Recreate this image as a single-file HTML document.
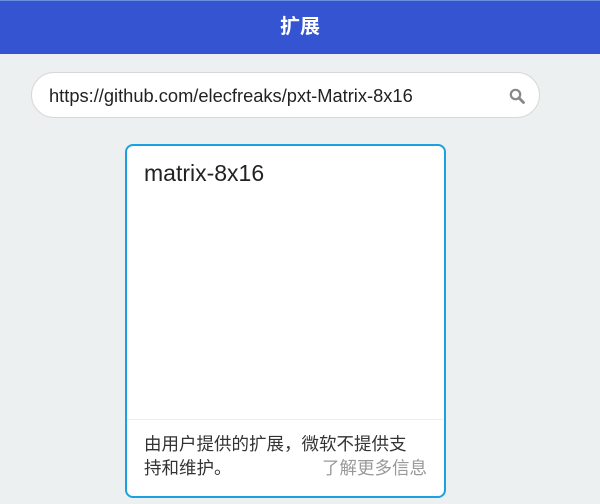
<!DOCTYPE html>
<html><head><meta charset="utf-8"><style>
*{margin:0;padding:0;box-sizing:border-box}
body{width:600px;height:504px;background:#ecf0f1;font-family:"Liberation Sans","Noto Sans CJK SC",sans-serif;position:relative;overflow:hidden}
.hdr{position:absolute;left:0;top:0;width:600px;height:54px;background:#3454d1;border-top:1px solid #6b8fe0;color:#fff;font-weight:bold;font-size:20px;text-align:center;line-height:52px}
.search{position:absolute;left:31px;top:72px;width:509px;height:46px;background:#fff;border:1px solid #d8d8d8;border-radius:23px}
.search span{position:absolute;left:17px;top:12px;font-size:18.3px;color:#222}
.card{position:absolute;left:125px;top:144px;width:321px;height:354px;background:#fff;border:2px solid #1ba1e2;border-radius:8px}
.title{position:absolute;left:17px;top:14px;font-size:23px;color:#222}
.div{position:absolute;left:0;right:0;top:273px;border-top:1px solid #eee}
.ft{position:absolute;left:17px;top:286px;width:272px;font-size:17.5px;line-height:24px;color:#333}
.more{position:absolute;right:17px;top:310px;font-size:17.5px;line-height:24px;color:#999}
</style></head><body>
<div class="hdr">扩展</div>
<div class="search"><span>https://github.com/elecfreaks/pxt-Matrix-8x16</span>
<svg style="position:absolute;left:477px;top:15px" width="16" height="16" viewBox="0 0 16 16"><circle cx="6.5" cy="6.5" r="4.7" fill="none" stroke="#888" stroke-width="2.2"/><path d="M10 10 L14.5 14.5" stroke="#888" stroke-width="2.8" stroke-linecap="round"/></svg></div>
<div class="card">
<div class="title">matrix-8x16</div>
<div class="div"></div>
<div class="ft">由用户提供的扩展，微软不提供支持和维护。</div>
<div class="more">了解更多信息</div>
</div>
</body></html>
